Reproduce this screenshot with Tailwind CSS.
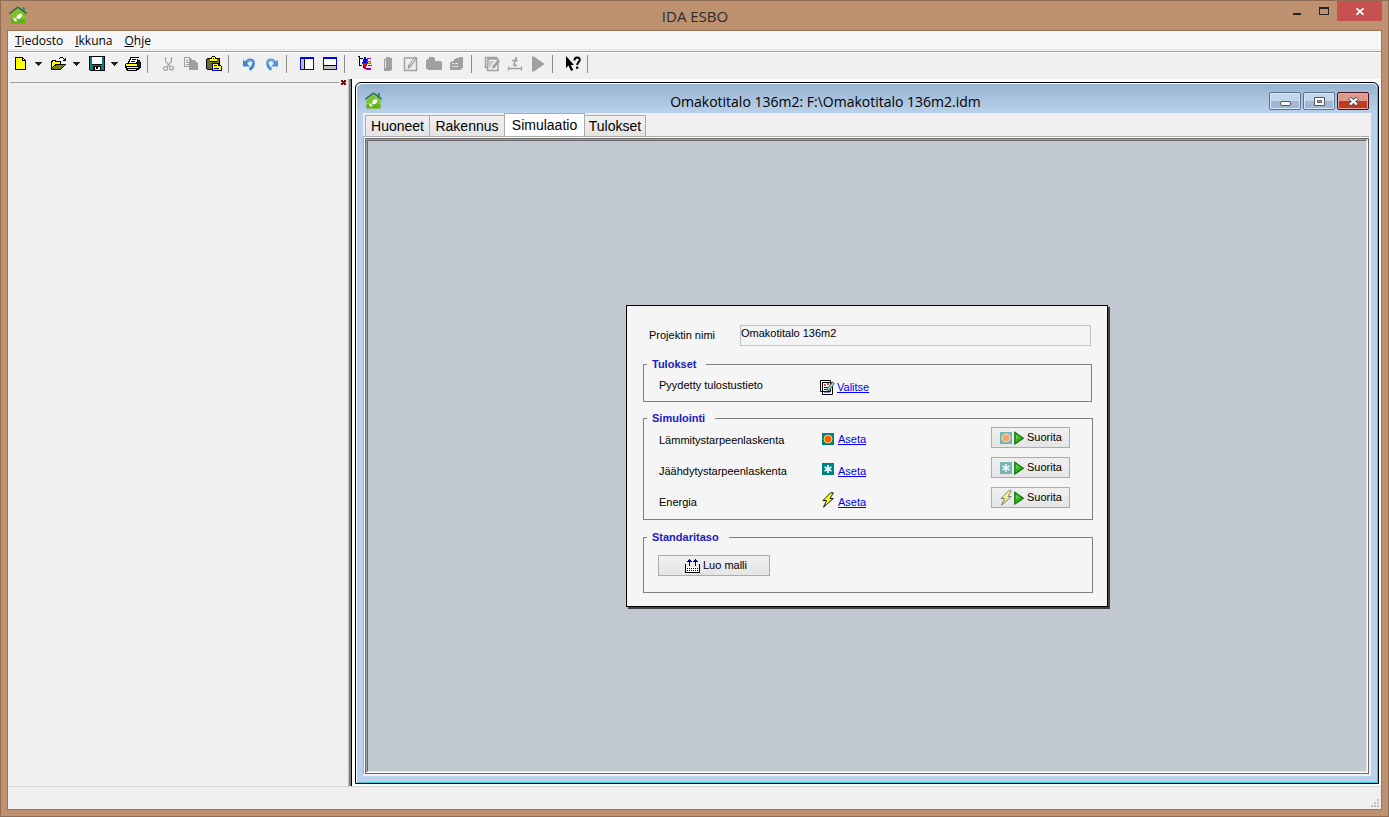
<!DOCTYPE html>
<html lang="fi">
<head>
<meta charset="utf-8">
<title>IDA ESBO</title>
<script src="https://cdn.jsdelivr.net/npm/@tailwindcss/browser@4"></script>
</head>
<body class="h-screen overflow-hidden font-['Liberation_Sans',Arial,sans-serif] text-black">

<svg class="hidden" aria-hidden="true">
  <symbol id="house" viewBox="0 0 16 16">
    <path d="M1.500 7.500 8 2.500l6.500 5V15.500h-13z" fill="#7ac520"/>
    <path d="M1.500 11.500h13v4h-13z" fill="#62b01a"/>
    <path d="M.3 6.800 8 1l7.700 5.800" fill="none" stroke="#1c7040" stroke-width="1.400"/>
    <path d="M12 1h2v3.500l-2-1.500z" fill="#2c8a54"/>
    <path d="M7 11.500C6 8.500 8 6.800 11.500 6.800c.5 2.700-1.500 5.200-4.500 4.700zM7 13.500c-2 .7-3.300-.5-3-3 1.700.2 3 1.300 3 3z" fill="#fff"/>
  </symbol>
  <symbol id="heat" viewBox="0 0 12 12">
    <path d="M0 0h12v12H0z" fill="#008080"/>
    <circle cx="6" cy="6" r="4" fill="#ff5a00" stroke="#ffd860" stroke-width="1"/>
  </symbol>
  <symbol id="cool" viewBox="0 0 12 12">
    <path d="M0 0h12v12H0z" fill="#008080"/>
    <path d="M6 2v8M2.500 4l7 4M9.500 4l-7 4" stroke="#e8ffff" stroke-width="1.700"/>
  </symbol>
  <symbol id="bolt" viewBox="0 0 12 16">
    <path d="M11.300.800 8.500.800 1 8.500h3.500L1.500 15.200 11.300 6.500H8z" fill="#ffff20" stroke="#000" stroke-width=".9"/>
  </symbol>
  <symbol id="play" viewBox="0 0 10 14">
    <path d="M.8 1.300 9.300 7.200.8 13z" fill="#2db81f" stroke="#107010" stroke-width="1.200"/>
    <path d="M2 3.500 5 6 2 8z" fill="#5fd050"/>
  </symbol>
</svg>

<div class="flex h-full flex-col border border-[#8f6c53] bg-[#be9170]">
  <!-- main title bar -->
  <header class="flex h-[29px] shrink-0 items-start">
    <svg class="mt-[5px] ml-2 size-[18px] shrink-0" viewBox="0 0 16 16"><use href="#house"/></svg>
    <h1 class="grow pt-1 pl-20 text-center font-['Open_Sans',sans-serif] text-[15px] leading-[22px] text-[#2b2b2b]">IDA ESBO</h1>
    <div class="mr-1.5 flex h-5">
      <button aria-label="Pienennä" class="flex w-[27px] justify-center pt-3"><span class="h-0.5 w-2 bg-[#222]"></span></button>
      <button aria-label="Suurenna" class="flex w-[27px] justify-center pt-1.5"><span class="h-2 w-2.5 border border-t-2 border-[#222]"></span></button>
      <button aria-label="Sulje" class="flex w-[45px] items-center justify-center bg-[#c75050]">
        <svg class="h-[7px] w-2" viewBox="0 0 8 7"><path d="M.5.300 7.500 6.700M7.500.300.5 6.700" stroke="#fff" stroke-width="1.700"/></svg>
      </button>
    </div>
  </header>

  <div class="mx-1.5 mb-1.5 flex min-h-0 grow flex-col border border-[#9b7355] bg-[#f0f0f0]">
    <!-- menu -->
    <nav class="flex h-[19px] shrink-0 items-center gap-3 border-b border-[#e8e8e8] bg-[#f5f6f7] px-[7px] pt-0.5 font-['Open_Sans',sans-serif] text-[12px] leading-4">
      <a href="#"><span class="underline">T</span>iedosto</a>
      <a href="#"><span class="underline">I</span>kkuna</a>
      <a href="#"><span class="underline">O</span>hje</a>
    </nav>

    <!-- toolbar -->
    <div role="toolbar" class="mt-px flex h-7 shrink-0 items-center border-t border-[#a0a0a0] pb-[3px] pl-[5px] shadow-[inset_0_1px_0_#fff]">
      <div class="flex items-center gap-2">
        <button aria-label="Uusi" class="flex items-center gap-[5px]">
          <svg class="size-4" viewBox="0 0 16 16" shape-rendering="crispEdges"><path d="M2 1h8v1h1v1h1v1h1v10H2z"/><path d="M3 2h6v3h3v8H3z" fill="#ff0"/><path d="M10 3h1v1h-1z" fill="#fff"/></svg>
          <svg class="h-1 w-[9px]" viewBox="0 0 9 4" shape-rendering="crispEdges"><path d="M1 0h7v1H1zM2 1h5v1H2zM3 2h3v1H3zM4 3h1v1H4z" fill="#222"/></svg>
        </button>
        <button aria-label="Avaa" class="flex items-center gap-[5px]">
          <svg class="size-4" viewBox="0 0 16 16" shape-rendering="crispEdges"><path d="M0 5h1V4h4v1h5v3h5v1h-1v1h-1v1h-1v1h-1v1h-1v1H0zM9 1h3v1H9zM8 2h1v1H8zM12 2h1v1h-1zM14 2h1v3h-3V4h1V3h1z"/><path d="M1 6h1V5h2v1h5v2H4v1H3v1H2v1H1z" fill="#ff0"/><path d="M5 9h8v1h-1v1h-1v1h-1v1H1v-1h1v-1h1v-1h2z" fill="#808000"/></svg>
          <svg class="h-1 w-[9px]" viewBox="0 0 9 4" shape-rendering="crispEdges"><path d="M1 0h7v1H1zM2 1h5v1H2zM3 2h3v1H3zM4 3h1v1H4z" fill="#222"/></svg>
        </button>
        <button aria-label="Tallenna" class="flex items-center gap-[5px]">
          <svg class="size-4" viewBox="0 0 16 16" shape-rendering="crispEdges"><path d="M0 0h16v15H1v-1H0z"/><path d="M1 1h2v8h10V1h2v13H1z" fill="#008080"/><path d="M3 1h10v7H3z" fill="#fff"/><path d="M4 10h8v4H4z"/><path d="M6 11h5v3H6z" fill="#fff"/><path d="M7 11h2v2H7z"/></svg>
          <svg class="h-1 w-[9px]" viewBox="0 0 9 4" shape-rendering="crispEdges"><path d="M1 0h7v1H1zM2 1h5v1H2zM3 2h3v1H3zM4 3h1v1H4z" fill="#222"/></svg>
        </button>
      </div>
      <button aria-label="Tulosta" class="ml-1.5">
        <svg class="size-4" viewBox="0 0 16 16" shape-rendering="crispEdges"><path d="M5 1h9v1h-1v2h2v2h1v6h-1v1h-1v1h-2v1H2v-1H1v-2H0V8h1V7h2V5h1V3h1z"/><path d="M6 2h7v1h-1v3h-1v1H4V6h1V4h1z" fill="#fff"/><path d="M7 3h4v1H7zM6 5h4v1H6z"/><path d="M1 8h11v2H1zM2 11h11v1H2zM3 13h8v1H3z" fill="#ff0"/><path d="M13 5h1v1h-1zM14 6h1v1h-1zM13 7h1v1h-1zM14 8h1v1h-1zM13 9h1v1h-1zM14 10h1v1h-1z" fill="#a00000"/></svg>
      </button>
      <span class="mr-3 ml-1.5 h-[18px] w-px bg-[#8c8c8c]"></span>
      <div class="flex items-center gap-[7px]">
        <button aria-label="Leikkaa">
          <svg class="size-4" viewBox="0 0 16 16"><g fill="none" stroke="#a0a0a0" stroke-width="1.200"><path d="M5.500 1v4l4.500 6M11.500 1v4L7 11"/><circle cx="5.500" cy="12.500" r="2"/><circle cx="11.500" cy="12" r="2"/></g></svg>
        </button>
        <button aria-label="Kopioi">
          <svg class="size-4" viewBox="0 0 16 16" shape-rendering="crispEdges"><path d="M1 1h6v1h1v1h1v8H1z" fill="#a0a0a0"/><path d="M2 2h4v2h2v6H2z" fill="#f0f0f0"/><path d="M3 4h2v1H3zM3 6h4v1H3zM3 8h4v1H3zM6 4h6v1h1v1h1v1h1v7H6z" fill="#a0a0a0"/></svg>
        </button>
        <button aria-label="Liitä">
          <svg class="size-4" viewBox="0 0 16 16" shape-rendering="crispEdges"><path d="M1 2h4V1h1V0h3v1h1v1h4v10H8v2H1V13H0V3h1z"/><path d="M1 3h12v10H1z" fill="#6b6b30"/><path d="M4 3h7v2H4zM6 1h3v2H6z" fill="#ff0"/><path d="M4 5h7v1H4zM7 2h1v1H7z"/><path d="M6 7h7v1h1v1h1v1h1v5H6z" fill="#000080"/><path d="M7 8h5v2h3v4H7z" fill="#ff0"/><path d="M8 9h3v1H8zM8 12h5v1H8z" fill="#000080"/></svg>
        </button>
      </div>
      <span class="mr-3 ml-1.5 h-[18px] w-px bg-[#8c8c8c]"></span>
      <div class="flex items-center gap-[7px]">
        <button aria-label="Kumoa">
          <svg class="size-4" viewBox="0 0 16 16"><path d="M4.500 7.500C7 2.500 13 3 12.500 7.500c-.2 3-2 5-4 6" fill="none" stroke="#3f83d4" stroke-width="2.800"/><path d="M2 3.500v7h7z" fill="#3f83d4"/><path d="M6 5.500c3-2.500 6-1 5.800 2" fill="none" stroke="#8ab8ee"/></svg>
        </button>
        <button aria-label="Tee uudelleen">
          <svg class="size-4" viewBox="0 0 16 16"><path d="M11.500 7.500C9 2.500 3 3 3.500 7.500c.2 3 2 5 4 6" fill="none" stroke="#4f92dc" stroke-width="2.800"/><path d="M14 3.500v7H7z" fill="#4f92dc"/><path d="M10 5.500C7 3 4 4.500 4.200 7.500" fill="none" stroke="#9cc6f2"/></svg>
        </button>
      </div>
      <span class="mr-3 ml-1.5 h-[18px] w-px bg-[#8c8c8c]"></span>
      <div class="flex items-center gap-[7px]">
        <button aria-label="Sivupaneeli">
          <svg class="size-4" viewBox="0 0 16 16" shape-rendering="crispEdges"><path d="M1 1h14v13H1z" fill="#0000f0"/><path d="M2 3h12v10H2z" fill="#fff"/><path d="M2 3h3v10H2z" fill="#c0c0c0"/><path d="M5 3h1v10H5z"/></svg>
        </button>
        <button aria-label="Alapaneeli">
          <svg class="size-4" viewBox="0 0 16 16" shape-rendering="crispEdges"><path d="M1 1h14v13H1z" fill="#0000f0"/><path d="M2 3h12v10H2z" fill="#fff"/><path d="M2 10h12v3H2z" fill="#c0c0c0"/><path d="M2 9h12v1H2z"/></svg>
        </button>
      </div>
      <span class="mr-3 ml-1.5 h-[18px] w-px bg-[#8c8c8c]"></span>
      <div class="flex items-center gap-[7px]">
        <button aria-label="Rakenne">
          <svg class="size-4" viewBox="0 0 16 16" shape-rendering="crispEdges"><path d="M1 0h2v2h3v1H3v6h2v1H2V1H1zM6 4h1v8H6z"/><path d="M10 2h4v1h-3v2h-1zM9 12h5v-2h-3V9h4v1h-1v4H9z" fill="#a000a0"/><path d="M10 5h4v1h-4zM13 6h1v2h-3V7h2z" fill="#a06080"/><path d="M11 6h2v1h-2z" fill="#ff0"/><path d="M7 1h2v2h1v3h1v1H5V6h1V3h1z" fill="#0000e0"/><path d="M5 7h6v1h-1v2H9v3H7v-3H6V8H5z" fill="#f00000"/></svg>
        </button>
        <button aria-label="Ovi" disabled>
          <svg class="size-4" viewBox="0 0 16 16" shape-rendering="crispEdges"><path d="M6 1h4v1h2v12h-1v1H4V3h2z" fill="#a0a0a0"/><path d="M5 4h1v8H5z" fill="#e8e8e8"/></svg>
        </button>
        <button aria-label="Muokkaa" disabled>
          <svg class="size-4" viewBox="0 0 16 16"><path d="M1.500 2v12.500h12V2z" fill="none" stroke="#a0a0a0" stroke-width="1.500"/><path d="M11.500.500 14 2 8 11l-3.500 2.500.5-4z" fill="#a0a0a0"/><path d="M7 9.500l4.500-7" stroke="#f0f0f0"/></svg>
        </button>
        <button aria-label="Kansio" disabled>
          <svg class="size-4" viewBox="0 0 16 16" shape-rendering="crispEdges"><path d="M1 3h2V1h5v1h1v3h6v1h1v8H2v-1H0V4h1z" fill="#a0a0a0"/></svg>
        </button>
        <button aria-label="Rakennus" disabled>
          <svg class="size-4" viewBox="0 0 16 16" shape-rendering="crispEdges"><path d="M1 6h2V5h2V3h2V2h3V1h4v11h-1v1h-1v1H1z" fill="#a0a0a0"/><path d="M3 7h2v1H3zM6 7h3v1H6zM3 10h2v1H3zM6 10h3v1H6z" fill="#e8e8e8"/></svg>
        </button>
      </div>
      <span class="mr-3 ml-1.5 h-[18px] w-px bg-[#8c8c8c]"></span>
      <div class="flex items-center gap-[7px]">
        <button aria-label="Tulostustiedot" disabled>
          <svg class="size-4" viewBox="0 0 16 16"><path d="M1.500 1.500h11v1M1.500 1v10.500h2M4 3h10v11.500H3.500z" fill="none" stroke="#a0a0a0" stroke-width="1.500"/><path d="M5 6h5M5 8h3M5 10h2" stroke="#a0a0a0"/><path d="M14 3.500l2 1.500-5 6.500-3 1.500.5-3z" fill="#a0a0a0"/></svg>
        </button>
        <button aria-label="Aika" disabled>
          <svg class="size-4" viewBox="0 0 16 16" fill="none" stroke="#a0a0a0"><path d="M9.500 1 7 8.500c-.3 1.500 1 1.500 3 .5M5 4.500h6" stroke-width="1.600"/><path d="M1.500 10.500v4M14.500 10.500v4M1.500 12.500h13" stroke-width="1.300"/></svg>
        </button>
        <button aria-label="Käynnistä" disabled>
          <svg class="size-4" viewBox="0 0 16 16"><path d="M2 .5h2L14.500 8 4 15.500H2z" fill="#a0a0a0"/></svg>
        </button>
      </div>
      <span class="mr-3 ml-1.5 h-[18px] w-px bg-[#8c8c8c]"></span>
      <button aria-label="Ohje">
        <svg class="size-4" viewBox="0 0 16 16"><path d="M1 0v12l2.500-2.500L6 15l2.200-1-2.400-5H9z"/><path d="M9.500 4.500c0-4 5.500-4 5.300-.5C14.700 6 12.200 6.500 12.200 9" fill="none" stroke="#000" stroke-width="2"/><path d="M11 10.500h2.300v2.300H11z"/></svg>
      </button>
      <span class="ml-1.5 h-[18px] w-px bg-[#8c8c8c]"></span>
    </div>

    <!-- workspace -->
    <div class="flex min-h-0 grow">
      <aside class="w-[340px] shrink-0">
        <div class="flex h-[7px] items-center gap-0.5 pl-0.5">
          <span class="h-px grow bg-[#a0a0a0]"></span>
          <button aria-label="Sulje paneeli" class="mr-0.5"><svg class="h-[5px] w-[5px]" viewBox="0 0 5 5" shape-rendering="crispEdges"><path d="M0 0h2v1h1V0h2v2H4v1h1v2H3V4H2v1H0V3h1V2H0z" fill="#800000"/></svg></button>
        </div>
      </aside>
      <div class="w-1 shrink-0 border-r border-l border-r-black border-l-[#c0c0c0] bg-[#808080]"></div>

      <main class="flex min-w-0 grow bg-white pt-[3px] pr-0.5 pb-0.5 pl-[3px]">
        <section class="flex min-w-0 grow flex-col rounded-t-md border border-black bg-[#b9d1ea] shadow-[inset_1px_1px_0_#fff,inset_-1px_-1px_0_#32c8dc]">
          <div class="m-px mb-0 flex h-[29px] shrink-0 items-start rounded-t-md bg-linear-to-b from-[#99b4d1] to-[#b9d1ea] pr-2">
            <svg class="mt-2 ml-2 size-[17px] shrink-0" viewBox="0 0 16 16"><use href="#house"/></svg>
            <h2 class="grow pt-2 text-center font-['Open_Sans',sans-serif] text-[14px] leading-5">Omakotitalo 136m2: F:\Omakotitalo 136m2.idm</h2>
            <div class="flex gap-0.5 pt-2">
              <button aria-label="Pienennä ikkuna" class="flex h-[18px] w-8 items-center justify-center rounded-xs border border-[#5c7090] bg-linear-to-b from-[#c2d6ec] from-50% to-[#9db9d6] to-50% pt-1 shadow-[inset_0_0_0_1px_#d8e6f5]"><span class="h-[5px] w-[11px] rounded-xs border border-[#535666] bg-white"></span></button>
              <button aria-label="Suurenna ikkuna" class="flex h-[18px] w-8 items-center justify-center rounded-xs border border-[#5c7090] bg-linear-to-b from-[#c2d6ec] from-50% to-[#9db9d6] to-50% shadow-[inset_0_0_0_1px_#d8e6f5]"><svg class="h-[9px] w-[11px]" viewBox="0 0 11 9"><path d="M.5.500h10v8H.5z" fill="#fff" stroke="#535666"/><path d="M3.500 3.500h4v2h-4z" fill="#9db9d6" stroke="#535666"/></svg></button>
              <button aria-label="Sulje ikkuna" class="flex h-[18px] w-8 items-center justify-center rounded-xs border border-[#431422] bg-linear-to-b from-[#e0988c] from-50% to-[#bf3a22] to-50% shadow-[inset_0_0_0_1px_#e8a79c]"><svg class="h-[9px] w-[11px]" viewBox="0 0 11 9"><path d="M1.500 1 9.500 8M9.500 1 1.500 8" stroke="#535666" stroke-width="4"/><path d="M2 1.500 9 7.500M9 1.500 2 7.500" stroke="#fff" stroke-width="2.200"/></svg></button>
            </div>
          </div>

          <div class="mr-[7px] mb-[7px] ml-[7px] flex min-h-0 grow flex-col bg-[#f0f0f0]">
            <div role="tablist" class="flex h-[23px] shrink-0 items-end pl-0.5 text-[14px] leading-4">
              <button role="tab" class="h-[21px] w-[65px] border border-b-0 border-[#acacac] bg-linear-to-b from-[#f0f0f0] to-[#e5e5e5]">Huoneet</button>
              <button role="tab" class="h-[21px] w-[74px] border-t border-[#acacac] bg-linear-to-b from-[#f0f0f0] to-[#e5e5e5]">Rakennus</button>
              <button role="tab" aria-selected="true" class="h-[23px] w-[81px] border border-b-0 border-[#acacac] bg-white">Simulaatio</button>
              <button role="tab" class="h-[21px] w-[61px] border-t border-r border-[#acacac] bg-linear-to-b from-[#f0f0f0] to-[#e5e5e5]">Tulokset</button>
            </div>
            <div class="mr-0.5 mb-0.5 flex min-h-0 grow border-t border-l border-[#acacac] bg-white pt-px pl-px">
              <div class="flex grow border border-[#696969]">
                <div class="flex grow border border-t-[#a0a0a0] border-r-white border-b-white border-l-[#a0a0a0]">
                  <div class="flex grow items-center justify-center border border-t-[#696969] border-r-[#e3e3e3] border-b-[#e3e3e3] border-l-[#696969] bg-[#c1c8d0]">

                    <form class="w-[482px] border border-black bg-[#f5f5f5] pt-[19px] pr-3.5 pb-[13px] pl-4 text-[11px] leading-[13px] shadow-[2px_2px_0_#404040]">
                      <div class="flex items-center pl-1.5">
                        <label for="project" class="w-[91px]">Projektin nimi</label>
                        <input id="project" value="Omakotitalo 136m2" readonly class="h-[21px] w-[351px] border border-[#c0c0c0] bg-[#f4f4f4] pb-1.5 outline-none">
                      </div>

                      <fieldset class="mt-3 mr-px h-11 border border-[#808080] pl-[15px]">
                        <legend class="-ml-3 pr-2.5 pl-[5px] font-bold text-[#2020c0]">Tulokset</legend>
                        <div class="flex items-center pt-2">
                          <span class="w-[161px] pb-1">Pyydetty tulostustieto</span>
                          <svg class="h-[15px] w-[15px]" viewBox="0 0 15 15"><path d="M.5.500h10v11H.5zM2.500 2.500h10v12h-10z" fill="#fff" stroke="#000"/><path d="M4 5h2M7 4h2" stroke="#f00" stroke-width="1.500"/><path d="M4 7.500h4M4 9.500h3M4 12h6" stroke="#00c"/><path d="M13.500 2.500 7.500 10.500" stroke="#3c6e6e" stroke-width="3.500"/><path d="M13.200 3.200 8 9.500" stroke="#a8e0e0" stroke-width="1.500"/></svg>
                          <a href="#" class="ml-0.5 text-[#0000ff] underline">Valitse</a>
                        </div>
                      </fieldset>

                      <fieldset class="mt-2.5 h-[108px] border border-[#808080] pl-[15px]">
                        <legend class="-ml-3 pr-2.5 pl-[5px] font-bold text-[#2020c0]">Simulointi</legend>
                        <div class="flex items-start justify-between pr-[22px]">
                          <div>
                            <div class="flex h-[31px] items-center"><span class="w-[163px]">Lämmitystarpeenlaskenta</span><svg class="mb-[3px] size-3" viewBox="0 0 12 12"><use href="#heat"/></svg><a href="#" class="ml-1 pb-0.5 text-[#0000ff] underline">Aseta</a></div>
                            <div class="flex h-[31px] items-center"><span class="w-[163px]">Jäähdytystarpeenlaskenta</span><svg class="mb-[5px] size-3" viewBox="0 0 12 12"><use href="#cool"/></svg><a href="#" class="ml-1 text-[#0000ff] underline">Aseta</a></div>
                            <div class="flex h-[31px] items-center"><span class="w-[163px]">Energia</span><svg class="mb-[5px] h-4 w-3" viewBox="0 0 12 16"><use href="#bolt"/></svg><a href="#" class="ml-1 text-[#0000ff] underline">Aseta</a></div>
                          </div>
                          <div class="flex flex-col gap-[9px] pt-0.5">
                            <button type="button" class="flex h-[21px] w-[79px] items-center border border-[#acacac] bg-linear-to-b from-[#f0f0f0] to-[#e5e5e5] pl-2"><svg class="size-3 opacity-50" viewBox="0 0 12 12"><use href="#heat"/></svg><svg class="ml-0.5 h-3.5 w-2.5" viewBox="0 0 10 14"><use href="#play"/></svg><span class="ml-[3px]">Suorita</span></button>
                            <button type="button" class="flex h-[21px] w-[79px] items-center border border-[#acacac] bg-linear-to-b from-[#f0f0f0] to-[#e5e5e5] pl-2"><svg class="size-3 opacity-50" viewBox="0 0 12 12"><use href="#cool"/></svg><svg class="ml-0.5 h-3.5 w-2.5" viewBox="0 0 10 14"><use href="#play"/></svg><span class="ml-[3px]">Suorita</span></button>
                            <button type="button" class="flex h-[21px] w-[79px] items-center border border-[#acacac] bg-linear-to-b from-[#f0f0f0] to-[#e5e5e5] pl-2"><svg class="h-4 w-3 opacity-50" viewBox="0 0 12 16"><use href="#bolt"/></svg><svg class="ml-0.5 h-3.5 w-2.5" viewBox="0 0 10 14"><use href="#play"/></svg><span class="ml-[3px]">Suorita</span></button>
                          </div>
                        </div>
                      </fieldset>

                      <fieldset class="mt-[11px] h-[62px] border border-[#808080] pl-3.5">
                        <legend class="-ml-[11px] pr-2.5 pl-[5px] font-bold text-[#2020c0]">Standaritaso</legend>
                        <button type="button" class="mt-[11px] flex h-[21px] w-28 items-center justify-center gap-[3px] border border-[#acacac] bg-linear-to-b from-[#f0f0f0] to-[#e5e5e5] pl-1">
                          <svg class="h-3.5 w-[15px]" viewBox="0 0 15 14" shape-rendering="crispEdges"><path d="M0 5h1v8h13V5h1v9H0z"/><path d="M1 8h13v5H1z" fill="#fff"/><path d="M2 9h1v1H2zM4 9h1v1H4zM6 9h1v1H6zM8 9h1v1H8zM10 9h1v1h-1zM12 9h1v1h-1zM2 11h1v1H2zM4 11h1v1H4zM6 11h1v1H6zM8 11h1v1H8zM10 11h1v1h-1zM12 11h1v1h-1z"/><path d="M4 0h1v1h1v1h1v1H5v4H4V3H2V2h1V1h1zM10 0h1v1h1v1h1v1h-2v4h-1V3H8V2h1V1h1z" fill="#000080"/></svg>
                          <span>Luo malli</span>
                        </button>
                      </fieldset>
                    </form>

                  </div>
                </div>
              </div>
            </div>
          </div>
        </section>
      </main>
    </div>

    <!-- status bar -->
    <footer class="flex h-[23px] shrink-0 items-end justify-end border-t border-[#d7d7d7] pr-0.5 pb-0.5">
      <svg class="size-2" viewBox="0 0 8 8" shape-rendering="crispEdges"><path d="M6 0h2v2H6zM3 3h2v2H3zM6 3h2v2H6zM0 6h2v2H0zM3 6h2v2H3zM6 6h2v2H6z" fill="#bfbfbf"/></svg>
    </footer>
  </div>
</div>
</body>
</html>
